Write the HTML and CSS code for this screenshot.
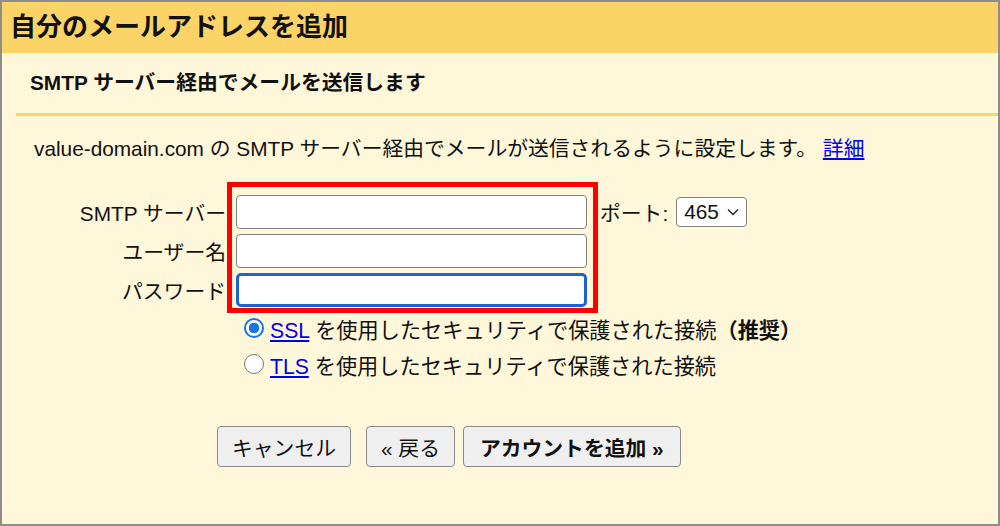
FILE: index.html
```html
<!DOCTYPE HTML>
<html lang="ja">
<head>
  <meta charset="utf-8">
  <title>自分のメールアドレスを追加</title>
  <link rel="stylesheet" href="styles.css">
</head>
<body>
<div class="window">
  <div class="header">自分のメールアドレスを追加</div>
  <div class="section">
    <div class="subtitle">SMTP サーバー経由でメールを送信します</div>
  </div>
  <div class="desc">value-domain.com の SMTP サーバー経由でメールが送信されるように設定します。 <a href="#">詳細</a></div>

  <div class="form">
    <label class="label" for="smtp">SMTP サーバー</label>
    <input class="field" id="smtp" type="text">
    <div class="port">ポート: <span class="select">465 <svg width="12" height="8" viewBox="0 0 12 8"><path d="M1 1.5 L6 6.5 L11 1.5" fill="none" stroke="#222" stroke-width="1.4"/></svg></span></div>

    <label class="label" for="user">ユーザー名</label>
    <input class="field" id="user" type="text">
    <div></div>

    <label class="label" for="pass">パスワード</label>
    <input class="field focused" id="pass" type="password">
    <div></div>

    <div class="highlight"></div>
  </div>

  <div class="radios">
    <div class="radio-row">
      <span class="radio checked"></span>
      <span><a href="#">SSL</a> を使用したセキュリティで保護された接続<b>（推奨）</b></span>
    </div>
    <div class="radio-row">
      <span class="radio"></span>
      <span><a href="#">TLS</a> を使用したセキュリティで保護された接続</span>
    </div>
  </div>

  <div class="buttons">
    <button class="btn cancel">キャンセル</button>
    <button class="btn back">« 戻る</button>
    <button class="btn primary">アカウントを追加 »</button>
  </div>
</div>
</body>
</html>
```

FILE: styles.css
```css
html, body {
  margin: 0;
  padding: 0;
}

body {
  font-family: "Liberation Sans", "Noto Sans CJK JP", sans-serif;
  font-size: 20.8px;
  color: #111;
  background: #fff;
}

.window {
  box-sizing: border-box;
  width: 1000px;
  height: 526px;
  border: 2px solid #8d8d8d;
  background: #fff7d9;
  overflow: hidden;
}

.header {
  height: 51px;
  line-height: 51px;
  padding-left: 8px;
  background: #fcd366;
  font-size: 26px;
  font-weight: bold;
  color: #111;
}

.section {
  margin-left: 14px;
  border-bottom: 3px solid #fcd366;
}

.subtitle {
  height: 60px;
  line-height: 60px;
  padding-left: 14px;
  font-weight: bold;
}

.desc {
  margin-top: 21px;
  padding-left: 32px;
  line-height: 24px;
}

a {
  color: #0000ee;
}

.form {
  position: relative;
  display: grid;
  grid-template-columns: 224px 351px auto;
  column-gap: 10px;
  row-gap: 5px;
  align-items: center;
  margin-top: 34px;
}

.label {
  text-align: right;
  white-space: nowrap;
}

.field {
  box-sizing: border-box;
  height: 34px;
  width: 351px;
  margin: 0;
  border: 1.5px solid #808080;
  border-radius: 4px;
  background: #fff;
  font: inherit;
}

.field.focused {
  border: 3px solid #1b64d6;
  border-radius: 5px;
  outline: none;
}

.port {
  display: flex;
  align-items: center;
  gap: 8px;
  margin-left: 3px;
  white-space: nowrap;
}

.select {
  box-sizing: border-box;
  display: inline-flex;
  align-items: center;
  justify-content: space-between;
  width: 71px;
  height: 30px;
  padding: 0 7px;
  border: 1.5px solid #808080;
  border-radius: 4px;
  background: #fff;
}

.highlight {
  position: absolute;
  left: 225px;
  top: -13px;
  width: 371px;
  height: 131px;
  box-sizing: border-box;
  border: 5px solid #ff0000;
  pointer-events: none;
}

.radios {
  margin-top: 3px;
  padding-left: 242px;
  font-size: 21.2px;
}

.radio-row {
  display: flex;
  align-items: center;
  gap: 6px;
  height: 36px;
}

.radio {
  box-sizing: border-box;
  width: 20px;
  height: 20px;
  border: 1.5px solid #767676;
  border-radius: 50%;
  background: #fff;
}

.radio.checked {
  border: 2px solid #1a73e8;
  background: radial-gradient(circle, #1a73e8 0 5px, #fff 5.5px);
}

.buttons {
  display: flex;
  margin-top: 44px;
  padding-left: 215px;
}

.btn {
  box-sizing: border-box;
  height: 41px;
  padding: 0 14px;
  border: 1.5px solid #8a8a8a;
  border-radius: 4px;
  background: #efefef;
  font: inherit;
  color: #111;
}

.back {
  margin-left: 15px;
}

.primary {
  margin-left: 8px;
  padding: 0 16px;
  font-weight: bold;
}
```
